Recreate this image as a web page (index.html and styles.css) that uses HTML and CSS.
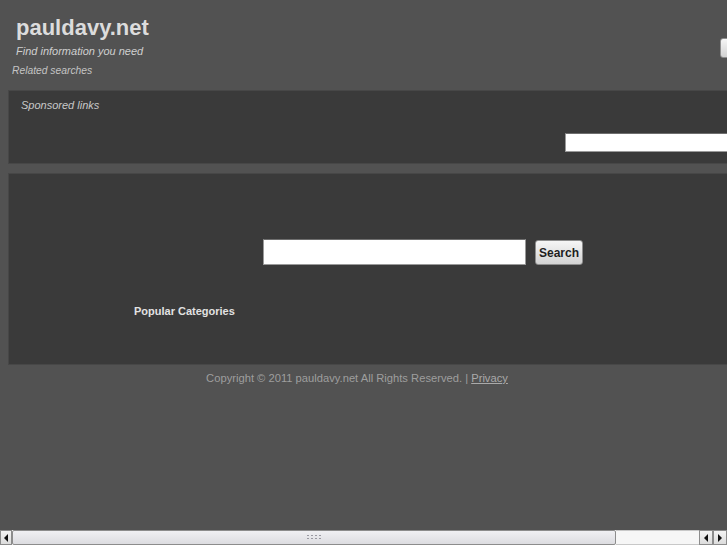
FILE: index.html
```html
<!DOCTYPE html>
<html>
<head>
<meta charset="utf-8">
<title>pauldavy.net</title>
<link rel="stylesheet" href="styles.css">
</head>
<body>
<div class="page">
  <header class="header">
    <div class="brand">
      <div class="title">pauldavy.net</div>
      <div class="tagline">Find information you need</div>
      <div class="related">Related searches</div>
    </div>
    <button class="btn top-btn" aria-label="Go"></button>
  </header>

  <section class="panel sponsored">
    <div class="sponsored-label">Sponsored links</div>
    <div class="sponsored-row">
      <input class="field small-field" type="text">
    </div>
  </section>

  <section class="panel main">
    <div class="search-row">
      <input class="field big-field" type="text">
      <button class="btn search-btn">Search</button>
    </div>
    <div class="popular">Popular Categories</div>
  </section>

  <footer class="footer">Copyright © 2011 pauldavy.net All Rights Reserved. | <a class="privacy" href="#">Privacy</a></footer>
</div>

<div class="hscroll">
  <div class="sb-btn sb-left"><span class="tri-left"></span></div>
  <div class="sb-thumb"><span class="grip"></span></div>
  <div class="sb-track"></div>
  <div class="sb-btn"><span class="tri-left"></span></div>
  <div class="sb-btn"><span class="tri-right"></span></div>
</div>
</body>
</html>
```

FILE: styles.css
```css
html {
  overflow: hidden;
  background: #525252;
}
body {
  margin: 0;
  background: #525252;
  font-family: "Liberation Sans", Arial, sans-serif;
}
.page {
  width: 826px;
}
.header {
  display: flex;
  justify-content: space-between;
  align-items: flex-start;
  padding: 15px 46px 0 12px;
}
.brand {
  display: flex;
  flex-direction: column;
}
.title {
  margin-left: 4px;
  font-size: 22px;
  line-height: 25px;
  font-weight: bold;
  color: #dcdcdc;
}
.tagline {
  margin: 5px 0 0 4px;
  font-size: 11px;
  line-height: 13px;
  font-style: italic;
  color: #cfcfcf;
}
.related {
  margin-top: 7px;
  font-size: 10.3px;
  line-height: 12px;
  font-style: italic;
  color: #c4c4c4;
}
.btn {
  font-family: "Liberation Sans", Arial, sans-serif;
  font-weight: bold;
  font-size: 12px;
  color: #1e1e1e;
  background: linear-gradient(#f6f6f6, #d2d2d2);
  border: 1px solid #8e8e8e;
  border-radius: 3px;
  padding: 0;
  margin: 0;
}
.top-btn {
  margin-top: 23px;
  width: 60px;
  height: 20px;
}
.panel {
  box-sizing: border-box;
  margin-left: 8px;
  width: 810px;
  background: #3a3a3a;
  border: 1px solid #474747;
}
.sponsored {
  margin-top: 13px;
  padding: 8px 12px 11px 12px;
}
.sponsored-label {
  font-size: 11px;
  line-height: 13px;
  font-style: italic;
  color: #c8c8c8;
}
.sponsored-row {
  display: flex;
  justify-content: flex-end;
  margin-top: 21px;
}
.field {
  box-sizing: border-box;
  margin: 0;
  background: #ffffff;
  border: 1px solid #9a9a9a;
  border-top-color: #6e6e6e;
  padding: 0 3px;
}
.small-field {
  width: 240px;
  height: 19px;
}
.main {
  margin-top: 9px;
  padding: 65px 12px 46px 125px;
}
.search-row {
  display: flex;
  align-items: flex-start;
  gap: 9px;
  margin-left: 129px;
}
.big-field {
  width: 263px;
  height: 26px;
}
.search-btn {
  width: 48px;
  height: 25px;
  margin-top: 1px;
}
.popular {
  margin-top: 40px;
  font-size: 11px;
  line-height: 13px;
  font-weight: bold;
  color: #e2e2e2;
}
.footer {
  width: 714px;
  margin-top: 7px;
  text-align: center;
  font-size: 11.2px;
  line-height: 13px;
  color: #9e9e9e;
}
.privacy {
  color: #aaaaaa;
  text-decoration: underline;
}

/* horizontal scrollbar overlay */
.hscroll {
  position: fixed;
  left: 0;
  bottom: 0;
  width: 727px;
  height: 15px;
  display: flex;
  background: #f2f2f2;
}
.sb-btn {
  box-sizing: border-box;
  width: 14px;
  height: 15px;
  display: flex;
  align-items: center;
  justify-content: center;
  background: linear-gradient(#f4f4f4, #dcdcdc);
  border: 1px solid #8c8c8c;
}
.sb-left {
  width: 12px;
}
.sb-thumb {
  box-sizing: border-box;
  width: 604px;
  height: 15px;
  display: flex;
  align-items: center;
  justify-content: center;
  background: linear-gradient(#f0f0f3, #dcdce0);
  border: 1px solid #8c8c8c;
  border-radius: 2px;
}
.grip {
  width: 16px;
  height: 7px;
  background-image: radial-gradient(circle, #9a9aa2 0.8px, transparent 1px);
  background-size: 4px 3px;
}
.sb-track {
  flex: 1;
  height: 15px;
  background: #f6f6f6;
  border-top: 1px solid #c8c8c8;
  border-bottom: 1px solid #c8c8c8;
  box-sizing: border-box;
}
.tri-left {
  width: 0;
  height: 0;
  border-top: 4px solid transparent;
  border-bottom: 4px solid transparent;
  border-right: 4px solid #111;
}
.tri-right {
  width: 0;
  height: 0;
  border-top: 4px solid transparent;
  border-bottom: 4px solid transparent;
  border-left: 4px solid #111;
}
```
